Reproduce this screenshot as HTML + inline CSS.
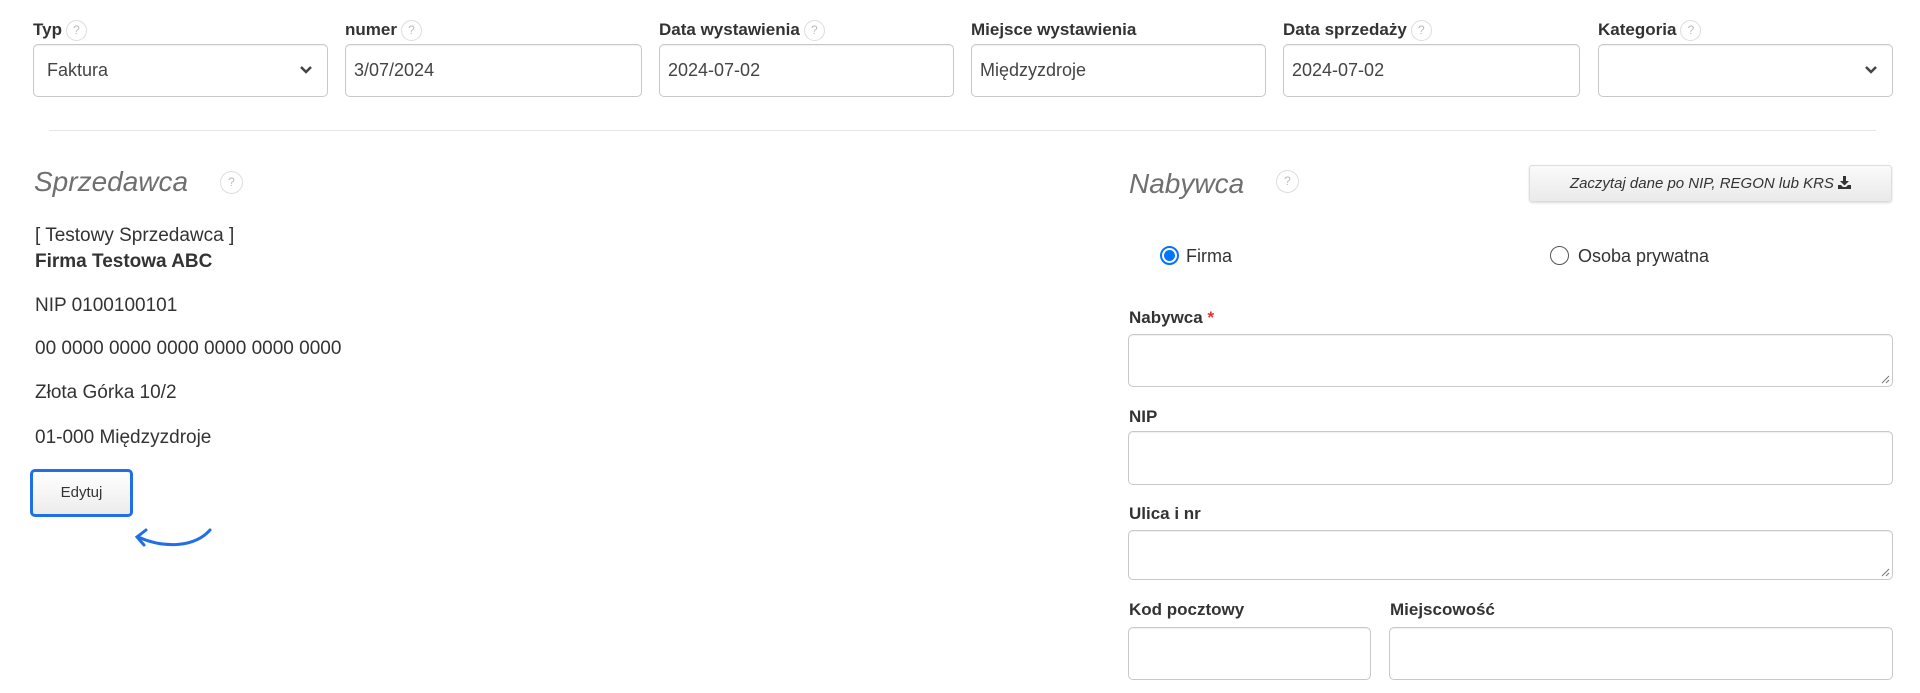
<!DOCTYPE html>
<html><head><meta charset="utf-8"><style>
*{box-sizing:border-box}
body{margin:0;width:1920px;height:693px;background:#fff;font-family:"Liberation Sans",Arial,sans-serif;color:#333;position:relative;overflow:hidden}
.a{position:absolute}
.lbl{font-weight:bold;font-size:17px;color:#333;white-space:nowrap}
.q{display:inline-block;width:21px;height:21px;border:1.5px solid #ddd;border-radius:50%;color:#bbb;font-size:12px;text-align:center;line-height:18px;font-weight:normal;vertical-align:middle;margin-left:4px}
.inp{border:1px solid #c8c8c8;border-radius:5px;background:#fff;font-size:18px;color:#444;padding-left:13px;display:flex;align-items:center;box-shadow:inset 0 1px 1px rgba(0,0,0,.06)}
.chev{position:absolute;right:14px;top:50%;margin-top:-6px}
.t{font-size:19px;color:#333;white-space:nowrap}
.grip{position:absolute;right:2px;bottom:2px}
</style></head><body>
<div class="a lbl" style="left:33px;top:20px">Typ<span class="q">?</span></div>
<div class="a lbl" style="left:345px;top:20px">numer<span class="q">?</span></div>
<div class="a lbl" style="left:659px;top:20px">Data wystawienia<span class="q">?</span></div>
<div class="a lbl" style="left:971px;top:20px">Miejsce wystawienia</div>
<div class="a lbl" style="left:1283px;top:20px">Data sprzedaży<span class="q">?</span></div>
<div class="a lbl" style="left:1598px;top:20px">Kategoria<span class="q">?</span></div>

<div class="a inp" style="left:33px;top:44px;width:295px;height:53px">Faktura<svg class="chev" width="14" height="10" viewBox="0 0 14 10"><path d="M2 2l5 5 5-5" stroke="#444" stroke-width="2.5" fill="none"/></svg></div>
<div class="a inp" style="left:345px;top:44px;width:297px;height:53px;padding-left:8px">3/07/2024</div>
<div class="a inp" style="left:659px;top:44px;width:295px;height:53px;padding-left:8px">2024-07-02</div>
<div class="a inp" style="left:971px;top:44px;width:295px;height:53px;padding-left:8px">Międzyzdroje</div>
<div class="a inp" style="left:1283px;top:44px;width:297px;height:53px;padding-left:8px">2024-07-02</div>
<div class="a inp" style="left:1598px;top:44px;width:295px;height:53px"><svg class="chev" width="14" height="10" viewBox="0 0 14 10"><path d="M2 2l5 5 5-5" stroke="#444" stroke-width="2.5" fill="none"/></svg></div>

<div class="a" style="left:49px;top:130px;width:1827px;height:1px;background:#e6e6e6"></div>

<div class="a" style="left:34px;top:166px;font-size:28px;font-style:italic;color:#6f6f6f">Sprzedawca</div>
<div class="a q" style="left:216px;top:171px;width:23px;height:23px;line-height:20px">?</div>
<div class="a t" style="left:35px;top:225px">[ Testowy Sprzedawca ]</div>
<div class="a t" style="left:35px;top:251px;font-weight:bold">Firma Testowa ABC</div>
<div class="a t" style="left:35px;top:295px">NIP 0100100101</div>
<div class="a t" style="left:35px;top:338px">00 0000 0000 0000 0000 0000 0000</div>
<div class="a t" style="left:35px;top:382px">Złota Górka 10/2</div>
<div class="a t" style="left:35px;top:427px">01-000 Międzyzdroje</div>
<div class="a" style="left:30px;top:469px;width:103px;height:48px;border:3px solid #1f6fe5;border-radius:5px;background:linear-gradient(#fff,#ececec);font-size:15px;text-align:center;line-height:42px;color:#333">Edytuj</div>
<svg class="a" style="left:130px;top:525px" width="90" height="30" viewBox="0 0 90 30"><path d="M80 5C65 22 35 24 8 12" stroke="#1f6fe5" stroke-width="3" fill="none" stroke-linecap="round"/><path d="M16 5L7 12L14 20" stroke="#1f6fe5" stroke-width="3" fill="none" stroke-linecap="round"/></svg>

<div class="a" style="left:1129px;top:168px;font-size:28px;font-style:italic;color:#6f6f6f">Nabywca</div>
<div class="a q" style="left:1272px;top:170px;width:23px;height:23px;line-height:20px">?</div>
<div class="a" style="left:1529px;top:165px;width:363px;height:37px;border:1px solid #ddd;border-radius:3px;background:linear-gradient(#fafafa,#eaeaea);font-size:15px;font-style:italic;line-height:35px;text-align:center;color:#333;box-shadow:0 1px 2px rgba(0,0,0,.15)">Zaczytaj dane po NIP, REGON lub KRS <svg width="13" height="13" viewBox="0 0 13 13" style="vertical-align:-1px"><path d="M5 0h3v5h3l-4.5 4.5L2 5h3z" fill="#333"/><path d="M0 9h3l2 2h3l2-2h3v4H0z" fill="#333"/></svg></div>

<div class="a" style="left:1160px;top:246px;width:19px;height:19px;border-radius:50%;border:2px solid #0075ff;background:#fff"><div style="margin:2px;width:11px;height:11px;border-radius:50%;background:#0075ff"></div></div>
<div class="a t" style="left:1186px;top:246px;font-size:18px">Firma</div>
<div class="a" style="left:1550px;top:246px;width:19px;height:19px;border-radius:50%;border:1.5px solid #555;background:#fff"></div>
<div class="a t" style="left:1578px;top:246px;font-size:18px">Osoba prywatna</div>

<div class="a lbl" style="left:1129px;top:308px">Nabywca <span style="color:#d33">*</span></div>
<div class="a inp" style="left:1128px;top:334px;width:765px;height:53px"><svg class="grip" width="10" height="10" viewBox="0 0 10 10"><path d="M9 2L2 9M9 6L6 9" stroke="#777" stroke-width="1"/></svg></div>
<div class="a lbl" style="left:1129px;top:407px">NIP</div>
<div class="a inp" style="left:1128px;top:431px;width:765px;height:54px"></div>
<div class="a lbl" style="left:1129px;top:504px">Ulica i nr</div>
<div class="a inp" style="left:1128px;top:530px;width:765px;height:50px"><svg class="grip" width="10" height="10" viewBox="0 0 10 10"><path d="M9 2L2 9M9 6L6 9" stroke="#777" stroke-width="1"/></svg></div>
<div class="a lbl" style="left:1129px;top:600px">Kod pocztowy</div>
<div class="a lbl" style="left:1390px;top:600px">Miejscowość</div>
<div class="a inp" style="left:1128px;top:627px;width:243px;height:53px"></div>
<div class="a inp" style="left:1389px;top:627px;width:504px;height:53px"></div>
</body></html>
